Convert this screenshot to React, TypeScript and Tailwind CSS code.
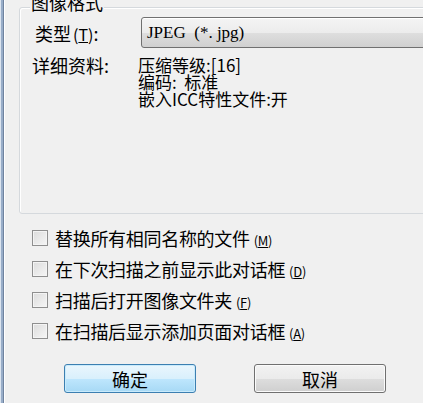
import React from 'react';

const font = { fontFamily: '"Noto Sans CJK SC", "Noto Sans", sans-serif' };

const Mn = ({ k }: { k: string }) => (
    <span className="ml-[4px] text-[13px] leading-none">
        (<span className="underline">{k}</span>)
    </span>
);

const Check = ({ label, k }: { label: string; k: string }) => (
    <label className="flex h-[31px] items-center gap-[7px] pl-[27px]">
        <span className="h-[16px] w-[16px] border border-[#8f8f8f] bg-[linear-gradient(135deg,#dcdcdc,#f6f6f6)] shadow-[inset_0_0_0_1px_#f4f4f4]" />
        <span className="text-[18px] leading-none tracking-[-0.3px] text-black">
            {label}
            <Mn k={k} />
        </span>
    </label>
);

export default function App() {
    return (
        <div
            className="flex h-[403px] w-[423px] overflow-hidden bg-[#f0f0f0] text-black"
            style={font}
        >
            <div className="flex shrink-0">
                <div className="w-[1px] bg-[#dbe4ef]" />
                <div className="w-[2px] bg-[#98adc8]" />
                <div className="w-[1px] bg-[#6f839f]" />
                <div className="w-[1px] bg-white" />
            </div>

            <div className="flex min-w-0 flex-1 flex-col">
                {/* group box */}
                <div className="relative ml-[14px] mt-[7px] h-[207px] w-[420px] shrink-0 rounded-[3px] border border-[#d5d9dd] shadow-[inset_1px_1px_0_#ffffff]">
                    <span className="absolute left-[10px] top-[-16px] bg-[#f0f0f0] px-[1px] text-[18px] leading-[20px]">
                        图像格式
                    </span>

                    <div className="mt-[9px] flex items-center pl-[15px]">
                        <span className="w-[106px] text-[18px] leading-none">
                            类型<span className="ml-[2px] text-[16px]">(<span className="underline">T</span>)</span>:
                        </span>
                        <div className="flex h-[31px] flex-1 items-center rounded-[3px] border border-[#707070] bg-[linear-gradient(to_bottom,#f4f4f4_0%,#ececec_50%,#dedede_52%,#d0d0d0_100%)] pl-[5px] shadow-[inset_0_1px_0_#ffffff]">
                            <span
                                className="whitespace-pre text-[17px] leading-none"
                                style={{ fontFamily: '"Liberation Serif", serif' }}
                            >
                                JPEG  (*. jpg)
                            </span>
                        </div>
                    </div>

                    <div className="mt-[8px] flex pl-[12px]">
                        <span className="w-[106px] pt-[1px] text-[18px] leading-[17px]">
                            详细资料:
                        </span>
                        <div className="flex flex-col text-[17px] leading-[17px]">
                            <span>压缩等级:[16]</span>
                            <span className="whitespace-pre">编码:  标准</span>
                            <span>嵌入ICC特性文件:开</span>
                        </div>
                    </div>
                </div>

                {/* options */}
                <div className="mt-[8px] flex flex-col">
                    <Check label="替换所有相同名称的文件" k="M" />
                    <Check label="在下次扫描之前显示此对话框" k="D" />
                    <Check label="扫描后打开图像文件夹" k="F" />
                    <Check label="在扫描后显示添加页面对话框" k="A" />
                </div>

                <div className="mt-[18px] flex gap-[58px] pl-[59px]">
                    <button className="h-[29px] w-[132px] rounded-[3px] border border-[#3c7fb1] bg-[linear-gradient(to_bottom,#eaf6fd_0%,#d9f0fc_50%,#bee6fd_52%,#a7d9f5_100%)] text-[18px] leading-none shadow-[inset_0_0_0_1px_#c9ebfc]">
                        确定
                    </button>
                    <button className="h-[29px] w-[132px] rounded-[3px] border border-[#707070] bg-[linear-gradient(to_bottom,#f2f2f2_0%,#ebebeb_50%,#dddddd_52%,#cfcfcf_100%)] text-[18px] leading-none shadow-[inset_0_0_0_1px_#fbfbfb]">
                        取消
                    </button>
                </div>
            </div>
        </div>
    );
}
